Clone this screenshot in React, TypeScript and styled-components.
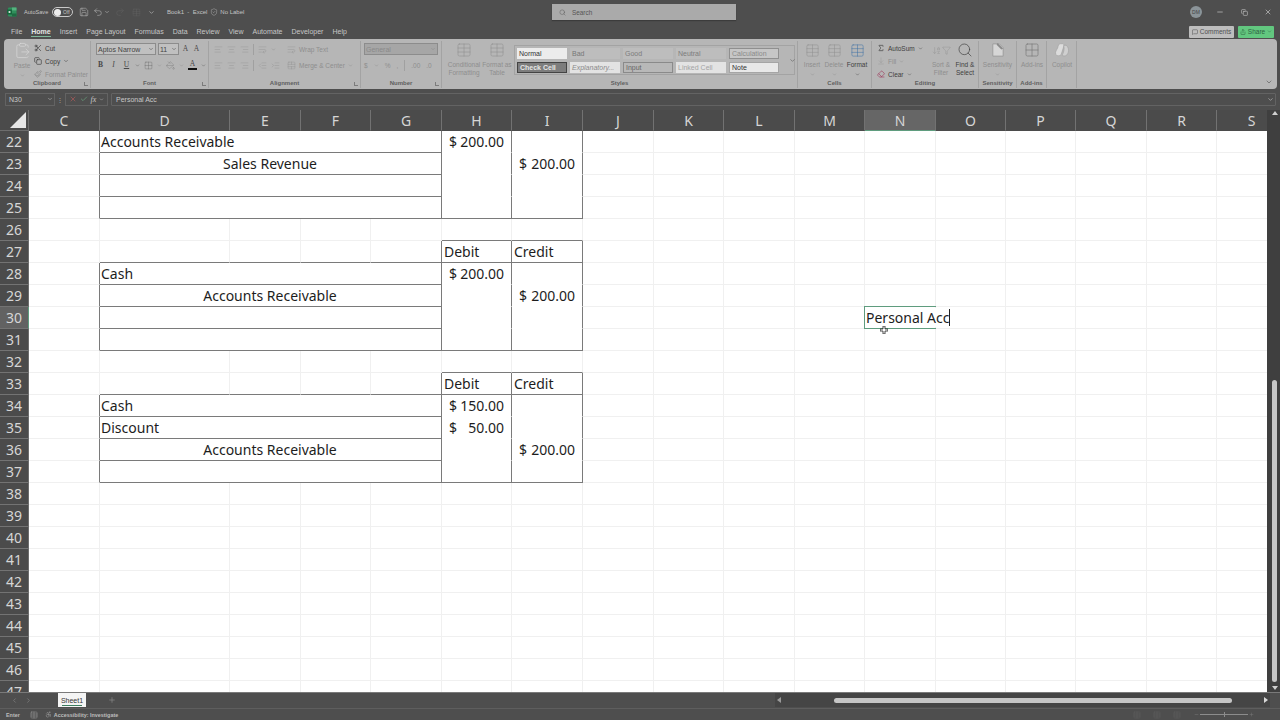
import React from 'react'
import styled, { createGlobalStyle } from 'styled-components'
import {
  Accessibility,
  AlignCenter,
  AlignLeft,
  AlignRight,
  ArrowDownAZ,
  ArrowDownToLine,
  Check,
  ChevronDown,
  ChevronLeft,
  ChevronRight,
  ClipboardPaste,
  Copy,
  Eraser,
  Filter,
  Grid2x2,
  Indent,
  MessageSquare,
  Minus,
  Outdent,
  PaintBucket,
  Paintbrush,
  Plus,
  Redo2,
  Save,
  Scissors,
  Search,
  Share,
  ShieldCheck,
  Sigma,
  Table,
  TableCellsMerge,
  Undo2,
  WrapText,
  X,
} from 'lucide-react'

const GlobalStyle = createGlobalStyle`
  html, body {
    margin: 0;
    padding: 0;
    height: 720px;
    overflow: hidden;
    background: #4e4e4e;
  }
  * { box-sizing: border-box; }
`

const Page = styled.div`
  width: 1280px;
  height: 720px;
  display: flex;
  flex-direction: column;
  overflow: hidden;
  background: #4e4e4e;
  font-family: 'Liberation Sans', Arial, sans-serif;
  color: #cfcfcf;
  & > * {
    flex: none;
  }
`

/* title bar */
const TitleBar = styled.div`
  height: 24px;
  display: grid;
  grid-template-columns: 552px 184px 1fr;
  align-items: center;
  font-size: 6px;
`
const TitleLeft = styled.div`
  display: flex;
  align-items: center;
  padding-left: 7px;
  color: #c4c4c4;
`
const AutoSave = styled.span`
  width: 24px;
  margin-left: 7px;
  font-size: 5.6px;
  white-space: nowrap;
`
const Toggle = styled.span`
  width: 21px;
  height: 10px;
  margin: 0 6px 0 4px;
  border: 1px solid #c9c9c9;
  border-radius: 5px;
  display: flex;
  align-items: center;
  padding-left: 1px;
  font-size: 5px;
  gap: 2px;
  flex: none;
  &::before {
    content: '';
    width: 7px;
    height: 7px;
    border-radius: 50%;
    background: #ececec;
  }
`
const QuickIcon = styled.span<{ $dim?: boolean; $gap?: number }>`
  display: inline-flex;
  align-items: center;
  flex: none;
  margin-right: ${p => p.$gap ?? 3}px;
  color: ${p => (p.$dim ? '#626262' : '#c4c4c4')};
`
const DocTitle = styled.span<{ $left: number }>`
  margin-left: ${p => p.$left}px;
  display: inline-flex;
  align-items: center;
  gap: 2px;
  white-space: pre;
`
const SearchBox = styled.div`
  height: 16px;
  background: #aaaaaa;
  box-shadow: 0 1px 1px #3c3c3c;
  display: flex;
  align-items: center;
  gap: 6px;
  padding-left: 7px;
  font-size: 6.4px;
  color: #555;
`
const TitleRight = styled.div`
  display: flex;
  justify-content: flex-end;
  align-items: center;
  gap: 14px;
  padding-right: 7px;
`
const Avatar = styled.span`
  width: 12px;
  height: 12px;
  border-radius: 50%;
  background: #8b9499;
  color: #444;
  font-size: 5px;
  display: flex;
  align-items: center;
  justify-content: center;
  margin-right: -1px;
`
const WindowButton = styled.span`
  width: 10px;
  display: flex;
  justify-content: center;
  color: #c8c8c8;
`

/* menu row */
const MenuRow = styled.div`
  height: 15px;
  display: flex;
  align-items: center;
  padding: 0 6px 0 11px;
  font-size: 7px;
  color: #c6c6c6;
`
const MenuItem = styled.span<{ $active?: boolean }>`
  position: relative;
  margin-right: 9px;
  color: ${p => (p.$active ? '#e4e4e4' : '#c6c6c6')};
  font-weight: ${p => (p.$active ? 700 : 400)};
  ${p =>
    p.$active &&
    `&::after {
      content: '';
      position: absolute;
      left: 0;
      right: 0;
      bottom: -2px;
      height: 1px;
      background: #7fb79a;
    }`}
`
const MenuActions = styled.div`
  margin-left: auto;
  display: flex;
  gap: 4px;
`
const Comments = styled.span`
  height: 12px;
  width: 45px;
  border-radius: 1px;
  background: #bdbdbd;
  color: #4f4f4f;
  font-size: 6.5px;
  display: flex;
  align-items: center;
  justify-content: center;
  gap: 2px;
`
const ShareButton = styled(Comments)`
  width: 36px;
  background: #62c77f;
  color: #2f5f3f;
`

/* ribbon */
const Ribbon = styled.div`
  position: relative;
  height: 50px;
  margin: 0 3px 0 4px;
  padding: 2px 0 0;
  border-radius: 4px;
  background: #b6b6b6;
  display: flex;
  font-size: 6.5px;
  color: #8e8e8e;
`
const Group = styled.div<{ $w: number }>`
  position: relative;
  width: ${p => p.$w}px;
  display: flex;
  flex-direction: column;
  border-right: 1px solid #a3a3a3;
  margin-bottom: 1px;
`
const GroupBody = styled.div<{ $pad?: number; $gap?: number }>`
  flex: 1;
  display: flex;
  padding: 1px 0 0 ${p => p.$pad ?? 3}px;
  gap: ${p => p.$gap ?? 0}px;
  min-height: 0;
`
const GroupLabel = styled.div`
  height: 9px;
  line-height: 9px;
  text-align: center;
  font-size: 6px;
  font-weight: 700;
  color: #5e5e5e;
`
const Launcher = styled.span`
  position: absolute;
  right: 2px;
  bottom: 2px;
  width: 4px;
  height: 4px;
  border-left: 1px solid #7c7c7c;
  border-bottom: 1px solid #7c7c7c;
`
const BigButton = styled.div<{ $w?: number; $dark?: boolean }>`
  width: ${p => p.$w ?? 28}px;
  display: flex;
  flex-direction: column;
  align-items: center;
  text-align: center;
  line-height: 7.5px;
  gap: 3px;
  color: ${p => (p.$dark ? '#3e3e3e' : '#8e8e8e')};
`
const ButtonIcon = styled.span`
  height: 16px;
  display: flex;
  align-items: center;
  gap: 1px;
`
const Stack = styled.div<{ $gap?: number; $w?: number }>`
  display: flex;
  flex-direction: column;
  flex: none;
  gap: ${p => p.$gap ?? 3}px;
  padding-top: 1px;
  ${p => p.$w && `width: ${p.$w}px;`}
`
const ToolRow = styled.div<{ $gap?: number; $dark?: boolean; $h?: number }>`
  height: ${p => p.$h ?? 10}px;
  display: flex;
  align-items: center;
  gap: ${p => p.$gap ?? 3}px;
  white-space: nowrap;
  color: ${p => (p.$dark ? '#3e3e3e' : '#8e8e8e')};
`
const Combo = styled.span<{ $w: number; $dim?: boolean }>`
  width: ${p => p.$w}px;
  height: 12px;
  border: 1px solid #8c8c8c;
  background: ${p => (p.$dim ? '#a6a6a6' : '#c0c0c0')};
  color: ${p => (p.$dim ? '#8a8a8a' : '#444')};
  display: flex;
  align-items: center;
  justify-content: space-between;
  padding: 0 1px;
  font-size: 7px;
`
const Letter = styled.span<{ $italic?: boolean; $under?: boolean; $bold?: boolean; $line?: boolean }>`
  width: 9px;
  text-align: center;
  font-size: 7.5px;
  line-height: 8px;
  color: #484848;
  font-family: 'Liberation Serif', serif;
  font-weight: ${p => (p.$bold ? 700 : 400)};
  font-style: ${p => (p.$italic ? 'italic' : 'normal')};
  text-decoration: ${p => (p.$under ? 'underline' : 'none')};
  ${p => p.$line && 'border-bottom: 2px solid #111;'}
`
const Divider = styled.span`
  width: 1px;
  height: 11px;
  background: #a0a0a0;
`
const Gallery = styled.div`
  width: 281px;
  height: 30px;
  margin: 3px 0 0 2px;
  padding: 2px 0 0 2px;
  border: 1px solid #a3a3a3;
  display: grid;
  grid-template-columns: repeat(5, 50px) 20px;
  grid-template-rows: 11px 11px;
  column-gap: 3px;
  row-gap: 3px;
`
const tones = {
  normal: 'background:#ececec;color:#333;',
  bad: 'background:#bdbdbd;color:#777;',
  good: 'background:#bdbdbd;color:#7c7c7c;',
  neutral: 'background:#bdbdbd;color:#7c7c7c;',
  calc: 'background:#c6c6c6;color:#8a8a8a;border:1px solid #8f8f8f;',
  check: 'background:#7d7d7d;color:#e6e6e6;font-weight:700;border:1px solid #444;',
  expl: 'background:#e3e3e3;color:#8a8a8a;font-style:italic;',
  input: 'background:#b8b8b8;color:#666;border:1px solid #8a8a8a;',
  linked: 'background:#e3e3e3;color:#a3a3a3;',
  note: 'background:#e8e8e8;color:#333;border:1px solid #a5a5a5;',
}
const StyleCell = styled.span<{ $tone: keyof typeof tones }>`
  ${p => tones[p.$tone]}
  display: flex;
  align-items: center;
  padding-left: 2px;
  font-size: 7px;
  overflow: hidden;
  white-space: nowrap;
`
const GalleryMore = styled.span`
  grid-column: 6;
  grid-row: 1 / 3;
  display: flex;
  align-items: center;
  justify-content: center;
  color: #5c5c5c;
`
const RibbonCollapse = styled.span`
  position: absolute;
  right: 4px;
  bottom: 3px;
  color: #5c5c5c;
  display: flex;
`

/* formula bar */
const FormulaBar = styled.div`
  height: 21px;
  display: flex;
  align-items: center;
  padding: 3px 4px 4px 5px;
  font-size: 7px;
`
const NameBox = styled.div`
  width: 50px;
  height: 13px;
  border: 1px solid #636363;
  display: flex;
  align-items: center;
  justify-content: space-between;
  padding: 0 1px 0 3px;
  color: #c8c8c8;
`
const Grip = styled.span`
  width: 10px;
  text-align: center;
  color: #aaa;
  font-size: 6px;
`
const FormulaButtons = styled.div`
  width: 43px;
  height: 13px;
  border: 1px solid #636363;
  display: flex;
  align-items: center;
  justify-content: space-around;
  padding: 0 1px;
`
const Fx = styled.span`
  font-family: 'Liberation Serif', serif;
  font-style: italic;
  font-size: 8px;
  color: #c8c8c8;
`
const FormulaInput = styled.div`
  flex: 1;
  margin-left: 3px;
  height: 13px;
  border: 1px solid #636363;
  border-radius: 1px;
  display: flex;
  align-items: center;
  justify-content: space-between;
  padding: 0 1px 0 4px;
  color: #c8c8c8;
`

/* sheet */
const SheetArea = styled.div`
  height: 582px;
  display: flex;
`
const GridClip = styled.div`
  width: 1267px;
  overflow: hidden;
`
const GridTable = styled.div`
  display: grid;
  grid-template-columns: 29px 71px 130px 71px 70px 71px 70px 71px 71px 70px 71px 70px 71px 70px 70px 71px 70px 70px;
  grid-template-rows: 21px repeat(26, 22px);
  font-family: 'Noto Sans', 'Liberation Sans', sans-serif;
  background: #fff;
`
const Corner = styled.div`
  background: #4b4b4b;
  border-right: 1px solid #6d6d6d;
  border-bottom: 1px solid #6d6d6d;
  position: relative;
  &::after {
    content: '';
    position: absolute;
    right: 2px;
    bottom: 2px;
    border-style: solid;
    border-width: 0 0 16px 16px;
    border-color: transparent transparent #e6e6e6 transparent;
  }
`
const ColumnHead = styled.div<{ $on?: boolean }>`
  background: ${p => (p.$on ? '#666666' : '#4b4b4b')};
  color: #d6d6d6;
  border-right: 1px solid #727272;
  border-bottom: 1px solid ${p => (p.$on ? '#5f9c7e' : '#4b4b4b')};
  font-size: 14px;
  display: flex;
  align-items: center;
  justify-content: center;
`
const RowHead = styled.div<{ $on?: boolean }>`
  background: ${p => (p.$on ? '#626262' : '#4b4b4b')};
  color: #d6d6d6;
  border-bottom: 1px solid #737373;
  border-right: 1px solid ${p => (p.$on ? '#5f9c7e' : '#6d6d6d')};
  font-size: 14px;
  display: flex;
  align-items: center;
  justify-content: center;
`
const Cell = styled.div<{
  $span?: number
  $align?: string
  $right?: boolean
  $bottom?: boolean
  $noBottom?: boolean
}>`
  position: relative;
  grid-column: span ${p => p.$span ?? 1};
  border-right: 1px solid ${p => (p.$right ? '#7a7a7a' : '#f0f0f0')};
  border-bottom: 1px solid ${p => (p.$bottom ? '#7a7a7a' : p.$noBottom ? 'transparent' : '#f0f0f0')};
  display: flex;
  align-items: center;
  justify-content: ${p => p.$align ?? 'flex-start'};
  padding: 0 2px;
  color: #1d1d1d;
  font-size: 14px;
  white-space: nowrap;
`
const MergedCell = styled(Cell)`
  padding: 0 2px 0 1px;
`
const Money = styled.div`
  width: 100%;
  display: flex;
  justify-content: space-between;
  padding: 0 5px;
  white-space: pre;
`
const Editor = styled.div`
  position: absolute;
  left: -1px;
  top: -1px;
  width: 72px;
  height: 23px;
  border: 1px solid #5f9c7e;
  border-right: none;
  display: flex;
  align-items: center;
  padding-left: 1px;
  z-index: 2;
  color: #1d1d1d;
`
const Caret = styled.span`
  flex: none;
  width: 1px;
  height: 17px;
  background: #222;
`
const EditorText = styled.span`
  flex: none;
  background: #fff;
`
const PointerMark = styled.svg`
  position: absolute;
  left: 15px;
  top: 19px;
  z-index: 3;
`
const VScroll = styled.div`
  width: 13px;
  background: #3f3f3f;
  display: flex;
  flex-direction: column;
  align-items: center;
  padding: 0 0 2px 2px;
`
const ScrollArrow = styled.span<{ $down?: boolean }>`
  width: 0;
  height: 0;
  border-left: 3px solid transparent;
  border-right: 3px solid transparent;
  ${p => (p.$down ? 'border-top: 4px solid #cfcfcf;' : 'border-bottom: 4px solid #cfcfcf;')}
  margin: ${p => (p.$down ? '4px 0 0' : '1px 0 0')};
`
const VSpace = styled.div`
  flex: 1;
  width: 100%;
  display: flex;
  flex-direction: column;
  align-items: center;
  justify-content: flex-end;
`
const VThumb = styled.div`
  width: 5px;
  height: 302px;
  border-radius: 3px;
  background: #c6c6c6;
`

/* sheet tabs */
const TabBar = styled.div`
  height: 16px;
  display: flex;
  align-items: flex-start;
  border-top: 1px solid #7a7a7a;
  color: #8c8c8c;
`
const TabNav = styled.div`
  width: 58px;
  height: 14px;
  display: flex;
  align-items: center;
  gap: 7px;
  padding-left: 11px;
`
const SheetTab = styled.div`
  width: 28px;
  height: 14px;
  background: #f4f4f4;
  color: #333;
  font-size: 7px;
  display: flex;
  align-items: center;
  justify-content: center;
  position: relative;
  &::after {
    content: '';
    position: absolute;
    left: 4px;
    right: 4px;
    bottom: 1px;
    height: 1px;
    background: #3d7d5f;
  }
`
const AddSheet = styled.span`
  margin-left: 22px;
  height: 14px;
  display: flex;
  align-items: center;
`
const HScroll = styled.div`
  margin-left: auto;
  width: 495px;
  height: 14px;
  display: flex;
  align-items: center;
  margin-right: 10px;
  color: #d0d0d0;
  background: #454545;
`
const HThumb = styled.div`
  width: 398px;
  height: 5px;
  border-radius: 3px;
  background: #c6c6c6;
  margin-left: 53px;
`
const HArrow = styled.span<{ $right?: boolean }>`
  width: 0;
  height: 0;
  border-top: 3px solid transparent;
  border-bottom: 3px solid transparent;
  ${p => (p.$right ? 'border-left: 4px solid #d8d8d8; margin-left: auto; margin-right: 2px;' : 'border-right: 4px solid #9a9a9a; margin-left: 2px;')}
`

/* status bar */
const StatusBar = styled.div`
  height: 12px;
  border-top: 1px solid #5e5e5e;
  display: flex;
  align-items: center;
  padding: 0 26px 0 6px;
  font-size: 5.4px;
  font-weight: 700;
  color: #bdbdbd;
`
const StatusIcon = styled.span<{ $l: number; $r: number }>`
  display: flex;
  margin: 0 ${p => p.$r}px 0 ${p => p.$l}px;
`
const StatusRight = styled.div`
  margin-left: auto;
  display: flex;
  align-items: center;
  gap: 12px;
  color: #6b6b6b;
`
const ZoomControl = styled.div`
  display: flex;
  align-items: center;
  gap: 1px;
  margin-left: 1px;
  color: #7d7d7d;
`
const ZoomTrack = styled.span`
  width: 48px;
  height: 1px;
  background: #8c8c8c;
  position: relative;
  &::after {
    content: '';
    position: absolute;
    left: 24px;
    top: -2px;
    width: 1px;
    height: 5px;
    background: #8c8c8c;
  }
`

const columns = 'C D E F G H I J K L M N O P Q R S'.split(' ')
const trailing = 'J K L M N O P Q R S'.split(' ')
const menus = ['File', 'Home', 'Insert', 'Page Layout', 'Formulas', 'Data', 'Review', 'View', 'Automate', 'Developer', 'Help']

type Entry = {
  kind: 'entry'
  text?: string
  center?: boolean
  debit?: string
  credit?: string
  last?: boolean
}
type Row = Entry | { kind: 'blank' } | { kind: 'above' } | { kind: 'heading' }

const rows: Record<number, Row> = {
  22: { kind: 'entry', text: 'Accounts Receivable', debit: '200.00' },
  23: { kind: 'entry', text: 'Sales Revenue', center: true, credit: '200.00' },
  24: { kind: 'entry' },
  25: { kind: 'entry', last: true },
  26: { kind: 'above' },
  27: { kind: 'heading' },
  28: { kind: 'entry', text: 'Cash', debit: '200.00' },
  29: { kind: 'entry', text: 'Accounts Receivable', center: true, credit: '200.00' },
  30: { kind: 'entry' },
  31: { kind: 'entry', last: true },
  32: { kind: 'above' },
  33: { kind: 'heading' },
  34: { kind: 'entry', text: 'Cash', debit: '150.00' },
  35: { kind: 'entry', text: 'Discount', debit: '50.00' },
  36: { kind: 'entry', text: 'Accounts Receivable', center: true, credit: '200.00' },
  37: { kind: 'entry', last: true },
}

const Amount = ({ value }: { value?: string }) =>
  value ? (
    <Money>
      <span>$</span>
      <span>{value}</span>
    </Money>
  ) : null

const renderJournal = (row: Row) => {
  if (row.kind === 'entry') {
    return (
      <>
        <Cell $right />
        <MergedCell $span={4} $right $bottom $align={row.center ? 'center' : 'flex-start'}>
          {row.text}
        </MergedCell>
        <Cell $right $bottom={row.last} $noBottom>
          <Amount value={row.debit} />
        </Cell>
        <Cell $right $bottom={row.last} $noBottom>
          <Amount value={row.credit} />
        </Cell>
      </>
    )
  }
  if (row.kind === 'heading') {
    return (
      <>
        <Cell />
        <Cell $bottom />
        <Cell $bottom />
        <Cell $bottom />
        <Cell $bottom $right />
        <Cell $right $bottom>Debit</Cell>
        <Cell $right $bottom>Credit</Cell>
      </>
    )
  }
  return (
    <>
      <Cell />
      <Cell />
      <Cell />
      <Cell />
      <Cell />
      <Cell $bottom={row.kind === 'above'} />
      <Cell $bottom={row.kind === 'above'} />
    </>
  )
}

const ExcelLogo = () => (
  <svg width="10" height="10" viewBox="0 0 10 10">
    <rect x="1" y="0.5" width="8.5" height="9" rx="1" fill="#2f8f5b" />
    <rect x="5" y="0.5" width="4.5" height="3" fill="#55b27f" />
    <rect x="5" y="6.5" width="4.5" height="3" fill="#1f6b43" />
    <rect x="0" y="2.5" width="5" height="5" fill="#16663c" />
    <rect x="1.6" y="4.2" width="1.8" height="1.6" fill="#fff" />
  </svg>
)

const SensitivityIcon = () => (
  <svg width="16" height="16" viewBox="0 0 17 17">
    <path d="M3 2h7l4 4v9H3z" fill="#d6d6d6" stroke="#9c9c9c" />
    <path d="M8 1l6 6-2 1-5-5z" fill="#8a8a8a" />
  </svg>
)

const CopilotIcon = () => (
  <svg width="16" height="16" viewBox="0 0 18 18">
    <path d="M7 2h3c2 0 1 3 0 6l-2 6c-1 2-5 2-6 0-1-3 1-5 2-7 1-3 1-5 3-5z" fill="#dcdcdc" stroke="#9a9a9a" strokeWidth="0.6" />
    <path d="M11 4c2-1 4 0 5 3s0 6-2 8c-1 1-4 1-5 0 2-3 3-7 2-11z" fill="#cfcfcf" stroke="#9a9a9a" strokeWidth="0.6" />
  </svg>
)

const App = () => (
  <Page>
    <GlobalStyle />
    <TitleBar>
      <TitleLeft>
        <ExcelLogo />
        <AutoSave>AutoSave</AutoSave>
        <Toggle>Off</Toggle>
        <QuickIcon $gap={4}><Save size={10} strokeWidth={1.2} /></QuickIcon>
        <QuickIcon $gap={1}><Undo2 size={10} strokeWidth={1.2} /></QuickIcon>
        <QuickIcon $gap={5}><ChevronDown size={6} /></QuickIcon>
        <QuickIcon $dim $gap={7}><Redo2 size={10} strokeWidth={1.2} /></QuickIcon>
        <QuickIcon $dim $gap={7}><Table size={9} strokeWidth={1.2} /></QuickIcon>
        <QuickIcon $gap={0}><ChevronDown size={7} /></QuickIcon>
        <DocTitle $left={12}>Book1  -  Excel</DocTitle>
        <DocTitle $left={3}><ShieldCheck size={8} strokeWidth={1.2} />No Label</DocTitle>
      </TitleLeft>
      <SearchBox>
        <Search size={7} strokeWidth={1.5} />
        Search
      </SearchBox>
      <TitleRight>
        <Avatar>DM</Avatar>
        <WindowButton><Minus size={8} /></WindowButton>
        <WindowButton><Copy size={7} /></WindowButton>
        <WindowButton><X size={8} /></WindowButton>
      </TitleRight>
    </TitleBar>

    <MenuRow>
      {menus.map(m => (
        <MenuItem key={m} $active={m === 'Home'}>{m}</MenuItem>
      ))}
      <MenuActions>
        <Comments><MessageSquare size={6} />Comments</Comments>
        <ShareButton><Share size={6} />Share<ChevronDown size={5} /></ShareButton>
      </MenuActions>
    </MenuRow>

    <Ribbon>
      <Group $w={87}>
        <GroupBody $pad={7} $gap={1}>
          <BigButton $w={22}>
            <ClipboardPaste size={17} strokeWidth={1} color="#d8d8d8" />
            Paste
            <ChevronDown size={5} />
          </BigButton>
          <Stack $gap={3}>
            <ToolRow $dark><Scissors size={8} />Cut</ToolRow>
            <ToolRow $dark><Copy size={8} />Copy<ChevronDown size={6} /></ToolRow>
            <ToolRow><Paintbrush size={8} />Format Painter</ToolRow>
          </Stack>
        </GroupBody>
        <GroupLabel>Clipboard</GroupLabel>
        <Launcher />
      </Group>

      <Group $w={118}>
        <GroupBody $pad={5}>
          <Stack $gap={4}>
            <ToolRow $gap={2} $h={12}>
              <Combo $w={60}>Aptos Narrow<ChevronDown size={6} /></Combo>
              <Combo $w={21}>11<ChevronDown size={6} /></Combo>
              <Letter>A</Letter>
              <Letter>A</Letter>
            </ToolRow>
            <ToolRow $gap={4} $h={12}>
              <Letter $bold>B</Letter>
              <Letter $italic>I</Letter>
              <Letter $under>U</Letter>
              <ChevronDown size={5} color="#555" />
              <Grid2x2 size={9} strokeWidth={1} color="#666" />
              <ChevronDown size={5} />
              <PaintBucket size={9} strokeWidth={1} color="#777" />
              <ChevronDown size={5} />
              <Letter $line>A</Letter>
              <ChevronDown size={5} color="#555" />
            </ToolRow>
          </Stack>
        </GroupBody>
        <GroupLabel>Font</GroupLabel>
        <Launcher />
      </Group>

      <Group $w={152}>
        <GroupBody $pad={5} $gap={5}>
          <Stack $gap={4} $w={68}>
            <ToolRow $gap={4} $h={12}>
              <AlignLeft size={9} strokeWidth={1} />
              <AlignCenter size={9} strokeWidth={1} />
              <AlignRight size={9} strokeWidth={1} />
              <Divider />
              <WrapText size={9} strokeWidth={1} />
              <ChevronDown size={5} />
            </ToolRow>
            <ToolRow $gap={4} $h={12}>
              <AlignLeft size={9} strokeWidth={1} />
              <AlignCenter size={9} strokeWidth={1} />
              <AlignRight size={9} strokeWidth={1} />
              <Divider />
              <Outdent size={9} strokeWidth={1} />
              <Indent size={9} strokeWidth={1} />
            </ToolRow>
          </Stack>
          <Stack $gap={4}>
            <ToolRow $h={12}><WrapText size={9} strokeWidth={1} />Wrap Text</ToolRow>
            <ToolRow $h={12}><TableCellsMerge size={9} strokeWidth={1} />Merge &amp; Center<ChevronDown size={5} /></ToolRow>
          </Stack>
        </GroupBody>
        <GroupLabel>Alignment</GroupLabel>
        <Launcher />
      </Group>

      <Group $w={81}>
        <GroupBody $pad={3}>
          <Stack $gap={4}>
            <Combo $w={74} $dim>General<ChevronDown size={6} /></Combo>
            <ToolRow $gap={6} $h={12}>
              <span>$</span>
              <ChevronDown size={5} />
              <span>%</span>
              <span>,</span>
              <Divider />
              <span>.00</span>
              <span>.0</span>
            </ToolRow>
          </Stack>
        </GroupBody>
        <GroupLabel>Number</GroupLabel>
        <Launcher />
      </Group>

      <Group $w={356}>
        <GroupBody $pad={4}>
          <BigButton $w={36}>
            <ButtonIcon><Table size={16} strokeWidth={0.8} /></ButtonIcon>
            <span>Conditional Formatting</span>
          </BigButton>
          <BigButton $w={30}>
            <ButtonIcon><Table size={16} strokeWidth={0.8} /></ButtonIcon>
            <span>Format as Table</span>
          </BigButton>
          <Gallery>
            <StyleCell $tone="normal">Normal</StyleCell>
            <StyleCell $tone="bad">Bad</StyleCell>
            <StyleCell $tone="good">Good</StyleCell>
            <StyleCell $tone="neutral">Neutral</StyleCell>
            <StyleCell $tone="calc">Calculation</StyleCell>
            <GalleryMore><ChevronDown size={7} /></GalleryMore>
            <StyleCell $tone="check">Check Cell</StyleCell>
            <StyleCell $tone="expl">Explanatory...</StyleCell>
            <StyleCell $tone="input">Input</StyleCell>
            <StyleCell $tone="linked">Linked Cell</StyleCell>
            <StyleCell $tone="note">Note</StyleCell>
          </Gallery>
        </GroupBody>
        <GroupLabel>Styles</GroupLabel>
      </Group>

      <Group $w={74}>
        <GroupBody $pad={3}>
          <BigButton $w={22}><ButtonIcon><Table size={15} strokeWidth={0.8} /></ButtonIcon>Insert<ChevronDown size={5} /></BigButton>
          <BigButton $w={22}><ButtonIcon><Table size={15} strokeWidth={0.8} /></ButtonIcon>Delete<ChevronDown size={5} /></BigButton>
          <BigButton $w={24} $dark><ButtonIcon><Table size={15} strokeWidth={0.8} color="#3b6ea5" /></ButtonIcon>Format<ChevronDown size={5} /></BigButton>
        </GroupBody>
        <GroupLabel>Cells</GroupLabel>
      </Group>

      <Group $w={107}>
        <GroupBody $pad={5}>
          <Stack $gap={3} $w={52}>
            <ToolRow $dark><Sigma size={8} />AutoSum<ChevronDown size={5} /></ToolRow>
            <ToolRow><ArrowDownToLine size={8} strokeWidth={1} />Fill<ChevronDown size={5} /></ToolRow>
            <ToolRow $dark><Eraser size={8} color="#a04060" />Clear<ChevronDown size={5} /></ToolRow>
          </Stack>
          <BigButton $w={24}>
            <ButtonIcon>
              <ArrowDownAZ size={9} strokeWidth={1} />
              <Filter size={9} strokeWidth={1} />
            </ButtonIcon>
            Sort &amp; Filter
          </BigButton>
          <BigButton $w={24} $dark>
            <ButtonIcon><Search size={16} strokeWidth={1} /></ButtonIcon>
            Find &amp; Select
          </BigButton>
        </GroupBody>
        <GroupLabel>Editing</GroupLabel>
      </Group>

      <Group $w={38}>
        <GroupBody $pad={1}>
          <BigButton $w={35}><ButtonIcon><SensitivityIcon /></ButtonIcon>Sensitivity<ChevronDown size={5} /></BigButton>
        </GroupBody>
        <GroupLabel>Sensitivity</GroupLabel>
      </Group>

      <Group $w={30}>
        <GroupBody $pad={2}>
          <BigButton $w={26}><ButtonIcon><Grid2x2 size={16} strokeWidth={1} color="#777" /></ButtonIcon>Add-ins</BigButton>
        </GroupBody>
        <GroupLabel>Add-ins</GroupLabel>
      </Group>

      <Group $w={30}>
        <GroupBody $pad={2}>
          <BigButton $w={26}><ButtonIcon><CopilotIcon /></ButtonIcon>Copilot</BigButton>
        </GroupBody>
      </Group>

      <RibbonCollapse><ChevronDown size={8} /></RibbonCollapse>
    </Ribbon>

    <FormulaBar>
      <NameBox>N30<ChevronDown size={6} /></NameBox>
      <Grip>⋮</Grip>
      <FormulaButtons>
        <X size={8} color="#b25a5a" />
        <Check size={8} color="#6aa67e" />
        <Fx>fx</Fx>
        <ChevronDown size={5} />
      </FormulaButtons>
      <FormulaInput>
        Personal Acc
        <ChevronDown size={7} />
      </FormulaInput>
    </FormulaBar>

    <SheetArea>
      <GridClip>
        <GridTable>
          <Corner />
          {columns.map(c => (
            <ColumnHead key={c} $on={c === 'N'}>{c}</ColumnHead>
          ))}
          {Array.from({ length: 26 }, (_, i) => i + 22).map(n => {
            const row: Row = rows[n] ?? { kind: 'blank' }
            return (
              <React.Fragment key={n}>
                <RowHead $on={n === 30}>{n}</RowHead>
                {renderJournal(row)}
                {trailing.map(c => (
                  <Cell key={c}>
                    {c === 'N' && n === 30 && (
                      <>
                        <Editor>
                          <EditorText>Personal Acc</EditorText>
                          <Caret />
                        </Editor>
                        <PointerMark width="8" height="8" viewBox="0 0 8 8">
                          <path d="M3 0h2v3h3v2H5v3H3V5H0V3h3z" fill="#fff" stroke="#222" strokeWidth="0.8" />
                        </PointerMark>
                      </>
                    )}
                  </Cell>
                ))}
              </React.Fragment>
            )
          })}
        </GridTable>
      </GridClip>
      <VScroll>
        <ScrollArrow />
        <VSpace>
          <VThumb />
        </VSpace>
        <ScrollArrow $down />
      </VScroll>
    </SheetArea>

    <TabBar>
      <TabNav>
        <ChevronLeft size={7} />
        <ChevronRight size={7} />
      </TabNav>
      <SheetTab>Sheet1</SheetTab>
      <AddSheet><Plus size={8} /></AddSheet>
      <HScroll>
        <HArrow />
        <HThumb />
        <HArrow $right />
      </HScroll>
    </TabBar>

    <StatusBar>
      Enter
      <StatusIcon $l={10} $r={7}><Table size={8} strokeWidth={1} /></StatusIcon>
      <StatusIcon $l={0} $r={2}><Accessibility size={7} strokeWidth={1.4} /></StatusIcon>
      Accessibility: Investigate
      <StatusRight>
        <Table size={8} strokeWidth={1} />
        <Table size={8} strokeWidth={1} />
        <Table size={8} strokeWidth={1} />
        <ZoomControl>
          <Minus size={5} />
          <ZoomTrack />
          <Plus size={5} />
        </ZoomControl>
      </StatusRight>
    </StatusBar>
  </Page>
)

export default App
